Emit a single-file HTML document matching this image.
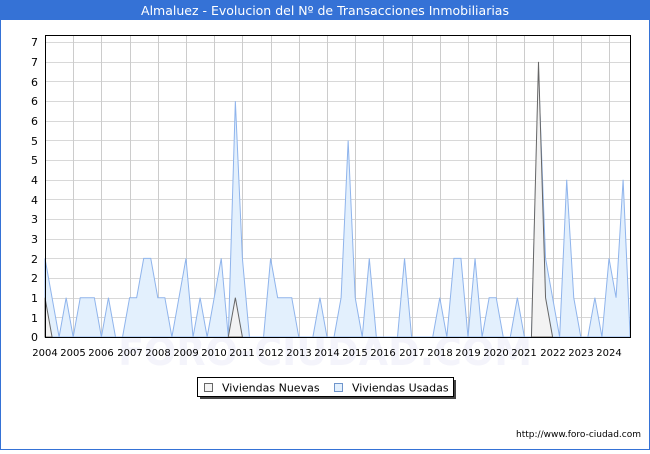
<!DOCTYPE html>
<html><head><meta charset="utf-8"><style>
html,body{margin:0;padding:0;background:#fff}
body{width:650px;height:450px;overflow:hidden;font-family:"DejaVu Sans","Liberation Sans",sans-serif}
</style></head><body>
<svg width="650" height="450" xmlns="http://www.w3.org/2000/svg" font-family="DejaVu Sans, Liberation Sans, sans-serif">
<rect x="0.5" y="0.5" width="649" height="449" fill="#fff" stroke="#3572d6"/>
<rect x="0" y="0" width="650" height="20" fill="#3572d6"/>
<text x="325" y="15" fill="#fff" font-size="12.5" text-anchor="middle">Almaluez - Evolucion del Nº de Transacciones Inmobiliarias</text>
<text x="325" y="365" fill="#f4f4fb" font-size="38" text-anchor="middle" font-weight="bold">FORO-CIUDAD.COM</text>
<g stroke="#d8d8d8" stroke-width="1">
<line x1="45" x2="630" y1="337.5" y2="337.5"/><line x1="45" x2="630" y1="317.5" y2="317.5"/><line x1="45" x2="630" y1="298.5" y2="298.5"/><line x1="45" x2="630" y1="278.5" y2="278.5"/><line x1="45" x2="630" y1="258.5" y2="258.5"/><line x1="45" x2="630" y1="239.5" y2="239.5"/><line x1="45" x2="630" y1="219.5" y2="219.5"/><line x1="45" x2="630" y1="199.5" y2="199.5"/><line x1="45" x2="630" y1="180.5" y2="180.5"/><line x1="45" x2="630" y1="160.5" y2="160.5"/><line x1="45" x2="630" y1="140.5" y2="140.5"/><line x1="45" x2="630" y1="121.5" y2="121.5"/><line x1="45" x2="630" y1="101.5" y2="101.5"/><line x1="45" x2="630" y1="81.5" y2="81.5"/><line x1="45" x2="630" y1="62.5" y2="62.5"/><line x1="45" x2="630" y1="42.5" y2="42.5"/>
</g>
<g stroke="#cccccc" stroke-width="1">
<line y1="35" y2="338" x1="73.5" x2="73.5"/><line y1="35" y2="338" x1="101.5" x2="101.5"/><line y1="35" y2="338" x1="130.5" x2="130.5"/><line y1="35" y2="338" x1="158.5" x2="158.5"/><line y1="35" y2="338" x1="186.5" x2="186.5"/><line y1="35" y2="338" x1="214.5" x2="214.5"/><line y1="35" y2="338" x1="242.5" x2="242.5"/><line y1="35" y2="338" x1="271.5" x2="271.5"/><line y1="35" y2="338" x1="299.5" x2="299.5"/><line y1="35" y2="338" x1="327.5" x2="327.5"/><line y1="35" y2="338" x1="355.5" x2="355.5"/><line y1="35" y2="338" x1="383.5" x2="383.5"/><line y1="35" y2="338" x1="412.5" x2="412.5"/><line y1="35" y2="338" x1="440.5" x2="440.5"/><line y1="35" y2="338" x1="468.5" x2="468.5"/><line y1="35" y2="338" x1="496.5" x2="496.5"/><line y1="35" y2="338" x1="524.5" x2="524.5"/><line y1="35" y2="338" x1="553.5" x2="553.5"/><line y1="35" y2="338" x1="581.5" x2="581.5"/><line y1="35" y2="338" x1="609.5" x2="609.5"/>
</g>
<g transform="translate(45,337) scale(7.05,-39.3)">
<polygon fill="#e3f0fd" stroke="#8fb4ec" stroke-width="1" vector-effect="non-scaling-stroke" points="0,0 0,2 1,1 2,0 3,1 4,0 5,1 6,1 7,1 8,0 9,1 10,0 11,0 12,1 13,1 14,2 15,2 16,1 17,1 18,0 19,1 20,2 21,0 22,1 23,0 24,1 25,2 26,0 27,6 28,2 29,0 30,0 31,0 32,2 33,1 34,1 35,1 36,0 37,0 38,0 39,1 40,0 41,0 42,1 43,5 44,1 45,0 46,2 47,0 48,0 49,0 50,0 51,2 52,0 53,0 54,0 55,0 56,1 57,0 58,2 59,2 60,0 61,2 62,0 63,1 64,1 65,0 66,0 67,1 68,0 69,0 70,6.7 71,2 72,1 73,0 74,4 75,1 76,0 77,0 78,1 79,0 80,2 81,1 82,4 83,0"/>
<polygon fill="#f3f3f3" stroke="#666" stroke-width="1" vector-effect="non-scaling-stroke" points="0,0 0,1 1,0"/>
<polygon fill="#f3f3f3" stroke="#666" stroke-width="1" vector-effect="non-scaling-stroke" points="26,0 27,1 28,0"/>
<polygon fill="#f3f3f3" stroke="#666" stroke-width="1" vector-effect="non-scaling-stroke" points="69,0 70,7 71,1 72,0"/>
</g>
<rect x="45.5" y="35.5" width="585" height="302" fill="none" stroke="#000"/>
<g font-size="11" fill="#000" text-anchor="end">
<text x="38" y="341">0</text><text x="38" y="322">1</text><text x="38" y="302">1</text><text x="38" y="282">2</text><text x="38" y="263">2</text><text x="38" y="243">3</text><text x="38" y="223">3</text><text x="38" y="204">4</text><text x="38" y="184">4</text><text x="38" y="164">5</text><text x="38" y="145">5</text><text x="38" y="125">6</text><text x="38" y="105">6</text><text x="38" y="86">6</text><text x="38" y="66">7</text><text x="38" y="46">7</text>
</g>
<g font-size="10" fill="#000" text-anchor="middle">
<text x="45" y="356">2004</text><text x="73" y="356">2005</text><text x="101" y="356">2006</text><text x="130" y="356">2007</text><text x="158" y="356">2008</text><text x="186" y="356">2009</text><text x="214" y="356">2010</text><text x="242" y="356">2011</text><text x="271" y="356">2012</text><text x="299" y="356">2013</text><text x="327" y="356">2014</text><text x="355" y="356">2015</text><text x="383" y="356">2016</text><text x="412" y="356">2017</text><text x="440" y="356">2018</text><text x="468" y="356">2019</text><text x="496" y="356">2020</text><text x="524" y="356">2021</text><text x="553" y="356">2022</text><text x="581" y="356">2023</text><text x="609" y="356">2024</text>
</g>
<rect x="200" y="380" width="256" height="19" fill="#444"/>
<rect x="197.5" y="377.5" width="256" height="19" fill="#fff" stroke="#000"/>
<rect x="204.5" y="383.5" width="8" height="8" fill="#f3f3f3" stroke="#666"/>
<text x="222" y="391.5" font-size="11">Viviendas Nuevas</text>
<rect x="334.5" y="383.5" width="8" height="8" fill="#e3f0fd" stroke="#6f95cc"/>
<text x="352" y="391.5" font-size="11">Viviendas Usadas</text>
<text x="641" y="437" font-size="9" text-anchor="end">http://www.foro-ciudad.com</text>
</svg>
</body></html>
